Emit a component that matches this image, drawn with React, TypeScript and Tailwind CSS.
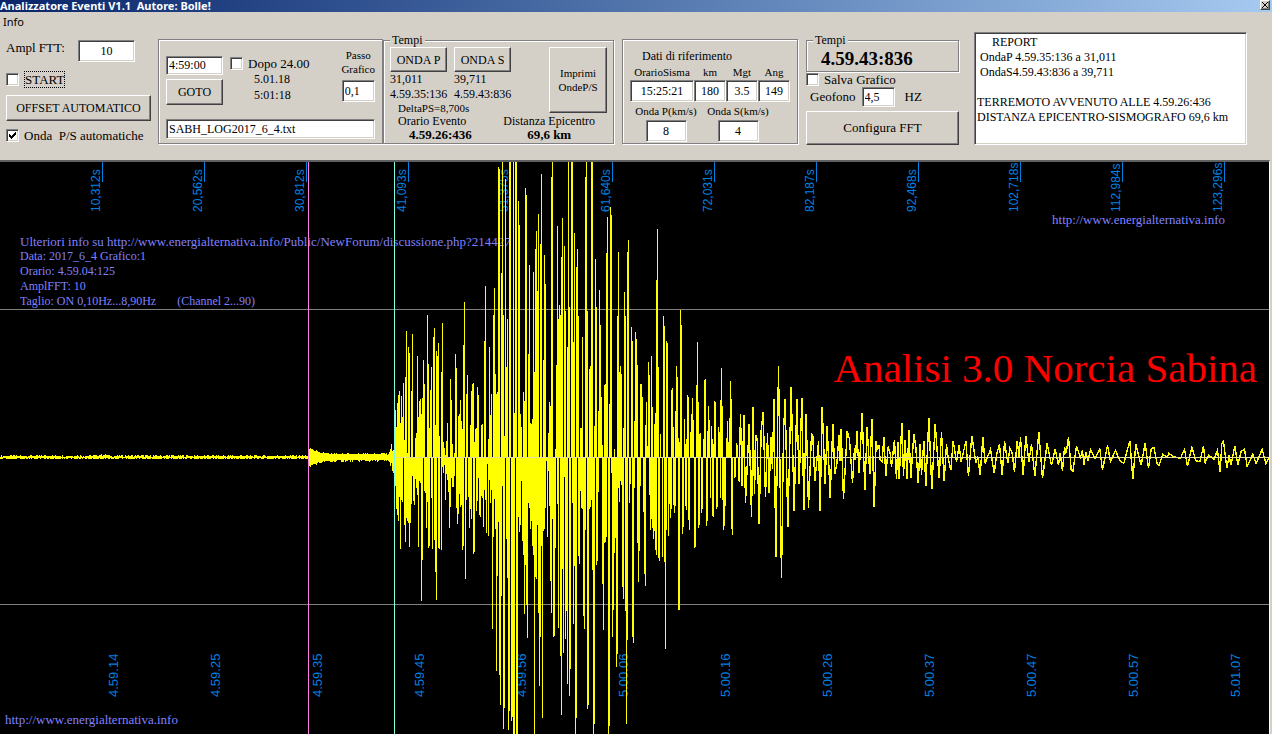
import { useId } from "react";
import clsx from "clsx";

const bevelIn =
  "border border-t-[#808080] border-l-[#808080] border-b-white border-r-white shadow-[inset_1px_1px_0_#404040,inset_-1px_-1px_0_#d4d0c8]";
const bevelOut =
  "border border-t-white border-l-white border-b-[#404040] border-r-[#404040] shadow-[inset_-1px_-1px_0_#808080]";
const etched = "border border-[#808080] shadow-[1px_1px_0_#fff,inset_1px_1px_0_#fff]";

const topTicks = [
  "10,312s", "20,562s", "30,812s", "41,093s", "51,375s", "61,640s",
  "72,031s", "82,187s", "92,468s", "102,718s", "112,984s", "123,296s",
];
const clockTicks = [
  "4.59.14", "4.59.25", "4.59.35", "4.59.45", "4.59.56", "5.00.06",
  "5.00.16", "5.00.26", "5.00.37", "5.00.47", "5.00.57", "5.01.07",
];

const AXIS = 457;
const BURST_X = 395;

// one value per column starting at BURST_X, 0 = the trace stays on the axis
const burstTop = [
  410, 427, 403, 395, 391, 423, 396, 417, 383, 440, 377, 331, 453, 347, 353, 0, 391, 334, 0, 0,
  438, 433, 356, 417, 401, 399, 414, 398, 360, 384, 0, 0, 315, 364, 428, 390, 367, 0, 337, 328,
  425, 351, 356, 343, 436, 0, 372, 323, 442, 448, 455, 441, 423, 0, 0, 379, 400, 444, 0, 453,
  354, 368, 0, 416, 414, 400, 421, 429, 345, 302, 0, 394, 375, 0, 0, 425, 391, 384, 383, 442,
  429, 428, 387, 395, 0, 0, 425, 424, 0, 341, 286, 0, 0, 439, 347, 415, 394, 0, 315, 288,
  374, 394, 392, 167, 169, 0, 273, 162, 315, 436, 179, 367, 319, 0, 162, 162, 0, 0, 162, 413,
  162, 162, 0, 201, 225, 414, 427, 0, 392, 401, 188, 195, 0, 354, 265, 423, 424, 419, 272, 372,
  249, 231, 291, 214, 0, 244, 174, 0, 360, 255, 284, 0, 0, 433, 402, 406, 177, 162, 0, 0,
  449, 365, 226, 319, 305, 315, 257, 218, 0, 246, 311, 0, 347, 162, 307, 0, 162, 162, 342, 233,
  0, 267, 249, 316, 0, 428, 428, 337, 0, 0, 177, 162, 311, 0, 369, 366, 162, 162, 0, 426,
  259, 307, 0, 411, 290, 325, 397, 445, 0, 385, 384, 253, 217, 0, 404, 207, 215, 0, 0, 449,
  0, 0, 316, 252, 372, 366, 374, 0, 428, 292, 316, 0, 252, 240, 0, 0, 327, 341, 0, 421,
  332, 339, 365, 0, 0, 384, 384, 397, 0, 0, 425, 402, 446, 362, 375, 0, 356, 407, 0, 424,
  413, 280, 229, 367, 0, 434, 0, 0, 316, 326, 0, 341, 343, 0, 0, 0, 390, 388, 427, 0,
  411, 366, 377, 438, 442, 310, 325, 0, 0, 419, 444, 439, 395, 397, 0, 432, 414, 398, 420, 0,
  0, 385, 342, 402, 434, 433, 0, 0, 439, 380, 379, 0, 431, 406, 420, 0, 426, 439, 444, 401,
  402, 0, 0, 427, 432, 400, 368, 406, 0, 0, 0, 438, 421, 442, 418, 381, 399, 0, 0, 0,
  0, 443, 445, 0, 427,
];
const burstBottom = [
  485, 508, 514, 520, 496, 548, 499, 501, 0, 524, 541, 517, 520, 522, 546, 522, 503, 475, 500, 504,
  478, 487, 494, 546, 480, 482, 600, 559, 0, 490, 492, 527, 501, 547, 545, 0, 497, 548, 0, 539,
  571, 599, 0, 547, 548, 0, 549, 466, 472, 464, 499, 473, 479, 491, 527, 506, 477, 486, 486, 475,
  0, 507, 523, 513, 493, 506, 504, 549, 545, 0, 578, 499, 0, 496, 527, 508, 518, 0, 553, 551,
  0, 510, 500, 477, 514, 516, 495, 497, 526, 489, 499, 532, 463, 535, 479, 502, 489, 628, 536, 498,
  528, 670, 575, 521, 674, 704, 595, 485, 728, 707, 0, 538, 577, 729, 710, 0, 720, 716, 734, 734,
  0, 734, 734, 516, 531, 524, 480, 540, 554, 613, 564, 604, 637, 502, 507, 528, 520, 545, 554, 734,
  576, 578, 524, 612, 685, 636, 545, 717, 530, 528, 507, 460, 536, 470, 505, 580, 612, 518, 636, 635,
  547, 0, 503, 627, 0, 655, 714, 568, 652, 476, 638, 610, 683, 0, 695, 668, 0, 502, 623, 565,
  734, 717, 0, 555, 563, 490, 507, 508, 615, 628, 529, 0, 708, 704, 508, 506, 499, 569, 734, 723,
  0, 564, 560, 491, 0, 0, 0, 583, 629, 542, 541, 536, 0, 734, 725, 0, 472, 636, 609, 552,
  537, 666, 653, 487, 501, 480, 484, 586, 598, 0, 610, 723, 639, 0, 502, 483, 0, 636, 642, 487,
  0, 0, 542, 581, 550, 485, 0, 0, 511, 573, 585, 0, 0, 0, 494, 529, 518, 527, 538, 530,
  549, 554, 0, 557, 560, 0, 0, 556, 0, 561, 648, 529, 0, 535, 503, 517, 508, 0, 504, 512,
  505, 0, 0, 609, 609, 0, 0, 533, 526, 0, 505, 509, 0, 519, 529, 0, 0, 0, 0, 547,
  546, 0, 0, 527, 524, 0, 512, 508, 0, 0, 0, 525, 520, 0, 0, 497, 0, 515, 516, 0,
  0, 508, 506, 0, 0, 497, 0, 499, 529, 525, 505, 0, 0, 0, 0, 0, 528, 534, 0, 477,
  476, 0, 0, 480, 481,
];

// turning points of the coda: x and y in thirds of a pixel from (740, 310)
const coda =
  "0,312 5,527 10,315 15,578 26,343 33,620 38,290 42,553 46,375 50,388 56,643 62,362 68,305 75,562 81,370 86,548 91,382 96,478 100,268 106,740 114,167 123,805 129,365 134,268 142,652 152,232 161,604 169,268 176,523 184,263 190,601 197,311 204,595 213,372 217,378 223,514 229,452 234,394 239,604 245,290 254,523 260,347 269,565 277,341 283,493 289,460 296,374 298,452 302,356 309,568 320,364 327,388 336,520 342,415 345,450 349,364 356,490 365,310 373,541 380,352 388,493 394,326 401,592 407,392 411,420 415,404 419,450 425,455 430,382 436,499 443,410 449,430 453,470 462,389 468,508 472,397 476,508 484,338 489,499 494,391 500,508 505,359 511,505 520,373 526,410 533,520 539,403 543,495 550,392 556,529 565,325 574,538 584,341 596,505 603,367 611,514 618,403 624,450 631,481 638,392 648,455 656,406 662,457 676,394 684,499 694,377 706,460 712,440 719,496 727,382 734,460 750,418 761,490 769,430 777,403 785,496 792,394 802,460 808,415 815,430 822,485 830,394 836,440 840,382 848,495 856,378 865,455 873,403 883,499 895,367 906,505 920,400 933,466 944,418 954,466 959,430 966,482 972,412 977,430 984,382 992,478 997,484 1008,409 1020,442 1026,420 1030,466 1036,427 1043,452 1050,418 1063,445 1078,418 1086,480 1101,406 1110,455 1125,421 1138,452 1150,460 1168,392 1177,508 1186,403 1202,466 1214,400 1224,475 1232,418 1240,412 1250,460 1256,466 1267,433 1280,442 1285,430 1300,440 1320,445 1332,418 1341,469 1354,412 1366,452 1378,455 1389,409 1394,458 1405,435 1420,448 1431,421 1439,487 1444,400 1449,394 1459,475 1466,436 1471,466 1483,409 1492,465 1502,424 1512,418 1520,469 1537,433 1547,460 1565,418 1576,460 1587,442";

function noise(n: number) {
  const v = Math.sin(n * 12.9898) * 43758.5453;
  return v - Math.floor(v);
}

function quietPath() {
  let d = "";
  for (let x = 0; x < BURST_X; x++) {
    let up = Math.round(0.3 + noise(x) * 1.8);
    let down = Math.round(noise(x + 500) * 1.4);
    if (x >= 98 && x < 108) up += 1;
    if (x >= 309) {
      const amp = 4 + 6 * Math.exp(-(x - 309) / 9);
      up = Math.round(amp - noise(x) * 1.6);
      down = Math.round(amp - noise(x + 90) * 2.4);
    }
    if (x >= 389) {
      up += [2, 5, 9, 2, 3, 6][x - 389];
      down += [1, 6, 3, 9, 12, 14][x - 389];
    }
    d += `M${x} ${AXIS - up}h1v${up + down + 1}h-1z`;
  }
  return d;
}

function burstPath() {
  return burstTop
    .map((t, i) => {
      const top = t || AXIS;
      const bottom = burstBottom[i] || AXIS;
      return `M${BURST_X + i} ${top}h1V${bottom + 1}h-1z`;
    })
    .join("");
}

function codaPoints() {
  return coda
    .split(" ")
    .map((p) => {
      const [x, y] = p.split(",").map(Number);
      return `${740.5 + x / 3},${310 + y / 3}`;
    })
    .join(" ");
}

function Field({ label, value, className }: { label: string; value: string; className?: string }) {
  return (
    <input
      type="text"
      aria-label={label}
      defaultValue={value}
      className={clsx("block min-w-0 bg-white text-black outline-none", bevelIn, className)}
    />
  );
}

function Check({ label, checked, focused }: { label: string; checked?: boolean; focused?: boolean }) {
  const id = useId();
  return (
    <div className="flex items-center gap-[5px]">
      <span className="relative block size-[13px]">
        <input
          id={id}
          type="checkbox"
          defaultChecked={checked}
          className={clsx("peer block size-[13px] appearance-none bg-white", bevelIn)}
        />
        <svg viewBox="0 0 13 13" className="pointer-events-none absolute inset-0 hidden size-[13px] peer-checked:block" shapeRendering="crispEdges">
          <path d="M3 5h1v1h1v1h1v-1h1v-1h1v-1h1v-1h1v3h-1v1h-1v1h-1v1h-1v1h-1v-1h-1v-1h-1z" fill="#000" />
        </svg>
      </span>
      <label
        htmlFor={id}
        className={clsx("text-[13px] leading-[15px] whitespace-pre", focused && "border border-dotted border-black")}
      >
        {label}
      </label>
    </div>
  );
}

function Button({ children, className }: { children: React.ReactNode; className?: string }) {
  return (
    <button type="button" className={clsx("block shrink-0 bg-[#d4d0c8] text-center", bevelOut, className)}>
      {children}
    </button>
  );
}

function StartColumn() {
  return (
    <div className="w-[145px] shrink-0 pt-2">
      <div className="flex h-[22px] items-start justify-between pr-4">
        <label htmlFor="ampl" className="text-[13px] leading-4">Ampl FTT:</label>
        <input id="ampl" type="text" defaultValue="10" className={clsx("h-[22px] w-[57px] bg-white text-center text-[12px] outline-none", bevelIn)} />
      </div>
      <div className="mt-[9px]">
        <Check label="START" focused />
      </div>
      <Button className="mt-[7px] h-[26px] w-full text-[12px]">OFFSET AUTOMATICO</Button>
      <div className="mt-[7px]">
        <Check label={"Onda  P/S automatiche"} checked />
      </div>
    </div>
  );
}

function GotoPanel() {
  return (
    <div className={clsx("mt-[7px] ml-[7px] h-[105px] w-[225px] shrink-0 px-[7px] pt-2", etched)}>
      <div className="flex h-[71px] items-start">
        <div className="flex flex-col gap-1 pt-2">
          <Field label="Orario" value="4:59:00" className="h-[19px] w-[57px] px-[2px] text-[12px]" />
          <Button className="h-[26px] w-[57px] text-[12px]">GOTO</Button>
        </div>
        <div className="ml-[7px] pt-2">
          <Check label="Dopo 24.00" />
          <p className="pl-6 text-[12px] leading-4">5.01.18</p>
          <p className="pl-6 text-[12px] leading-4">5:01:18</p>
        </div>
        <div className="ml-auto flex flex-col items-center">
          <label htmlFor="passo" className="text-center text-[11px] leading-[14px]">
            Passo
            <br />
            Grafico
          </label>
          <input id="passo" type="text" defaultValue="0,1" className={clsx("mt-1 h-[22px] w-[33px] bg-white px-[2px] text-[12px] outline-none", bevelIn)} />
        </div>
      </div>
      <Field label="File" value="SABH_LOG2017_6_4.txt" className="h-5 w-full px-[2px] text-[12px]" />
    </div>
  );
}

function WavePick({ name, seconds, clock }: { name: string; seconds: string; clock: string }) {
  return (
    <div className="w-[57px]">
      <Button className="h-[25px] w-[57px] text-[12px]">{name}</Button>
      <p className="text-[12px] leading-[14px]">{seconds}</p>
      <p className="text-[12px] leading-4">{clock}</p>
    </div>
  );
}

function TimesPanel() {
  return (
    <fieldset className={clsx("mt-px h-[111px] w-[231px] shrink-0 px-[6px]", etched)}>
      <legend className="bg-[#d4d0c8] px-[2px] text-[12px] leading-[14px]">Tempi</legend>
      <div className="flex h-[68px] items-start justify-between">
        <div>
          <div className="flex gap-[7px]">
            <WavePick name="ONDA P" seconds="31,011" clock="4.59.35:136" />
            <WavePick name="ONDA S" seconds="39,711" clock="4.59.43:836" />
          </div>
          <p className="pl-2 text-[11px] leading-[13px]">DeltaPS=8,700s</p>
        </div>
        <Button className="h-[66px] w-[58px] text-[11px] leading-[14px]">
          Imprimi
          <br />
          OndeP/S
        </Button>
      </div>
      <div className="flex justify-between pr-3 pl-2">
        <div>
          <p className="text-[12px] leading-[13px]">Orario Evento</p>
          <p className="pl-[11px] text-[13px] leading-[14px] font-bold">4.59.26:436</p>
        </div>
        <div className="text-center">
          <p className="text-[12px] leading-[13px]">Distanza Epicentro</p>
          <p className="text-[13px] leading-[14px] font-bold">69,6 km</p>
        </div>
      </div>
    </fieldset>
  );
}

const refs = [
  { label: "OrarioSisma", value: "15:25:21" },
  { label: "km", value: "180" },
  { label: "Mgt", value: "3.5" },
  { label: "Ang", value: "149" },
];
const speeds = [
  { label: "Onda P(km/s)", value: "8" },
  { label: "Onda S(km/s)", value: "4" },
];

function ReferencePanel() {
  return (
    <div className={clsx("mt-[7px] ml-2 h-[105px] w-[176px] shrink-0 px-[7px] pt-2", etched)}>
      <h2 className="pl-3 text-[12px] leading-4">Dati di riferimento</h2>
      <div className="grid grid-cols-[64px_32px_32px_32px]">
        {refs.map((r) => (
          <label key={r.label} className="text-center text-[11px] leading-4">
            {r.label}
            <Field label={r.label} value={r.value} className="h-[22px] w-full text-center text-[12px]" />
          </label>
        ))}
      </div>
      <div className="grid grid-cols-[72px_72px]">
        {speeds.map((s) => (
          <label key={s.label} className="text-center text-[11px] leading-[18px] whitespace-nowrap">
            {s.label}
            <Field label={s.label} value={s.value} className="mx-auto h-[22px] w-[41px] text-center text-[12px]" />
          </label>
        ))}
      </div>
    </div>
  );
}

function GeophoneColumn() {
  return (
    <div className="ml-2 w-[153px] shrink-0 pt-px">
      <fieldset className={clsx("h-[39px] px-[6px]", etched)}>
        <legend className="bg-[#d4d0c8] px-[2px] text-[12px] leading-[14px]">Tempi</legend>
        <p className="pl-2 text-[19px] leading-6 font-bold">4.59.43:836</p>
      </fieldset>
      <Check label="Salva Grafico" />
      <div className="flex h-5 items-center gap-[6px] pl-1">
        <label htmlFor="geofono" className="text-[13px] leading-4">Geofono</label>
        <input id="geofono" type="text" defaultValue="4,5" className={clsx("h-5 w-[33px] bg-white px-[2px] text-[12px] outline-none", bevelIn)} />
        <span className="pl-1 text-[13px] leading-4">HZ</span>
      </div>
      <Button className="mt-1 h-[34px] w-full text-[13px]">Configura FFT</Button>
    </div>
  );
}

const report = `     REPORT
 OndaP 4.59.35:136 a 31,011
 OndaS4.59.43:836 a 39,711

TERREMOTO AVVENUTO ALLE 4.59.26:436
DISTANZA EPICENTRO-SISMOGRAFO 69,6 km`;

function Chart() {
  return (
    <main className="relative min-h-[572px] flex-1 overflow-hidden bg-black text-[13px] leading-[15px] text-[#8080ff]">
      <div className="absolute top-[72px] left-5 whitespace-pre">
        <p>Ulteriori info su http://www.energialternativa.info/Public/NewForum/discussione.php?214427</p>
        <div className="text-[12px]">
          <p>Data: 2017_6_4 Grafico:1</p>
          <p>Orario: 4.59.04:125</p>
          <p>AmplFFT: 10</p>
          <p>{"Taglio: ON 0,10Hz...8,90Hz       (Channel 2...90)"}</p>
        </div>
      </div>
      <a href="#sito" className="absolute top-[50px] right-11">http://www.energialternativa.info</a>
      <a href="#sito" className="absolute bottom-[7px] left-[5px]">http://www.energialternativa.info</a>
      <h1 className="absolute top-[182px] right-3 text-[41px] leading-[48px] whitespace-nowrap text-[#ff0000]">
        Analisi 3.0 Norcia Sabina
      </h1>
      <svg
        viewBox="0 162 1269 572"
        preserveAspectRatio="xMinYMin slice"
        className="pointer-events-none absolute inset-0 size-full font-['Liberation_Sans',Arial,sans-serif]"
      >
        {topTicks.map((t, i) => (
          <g key={t} fill="#0080e0" className="text-[12px]">
            <rect x={102 + i * 102} y={162} width={1} height={20} />
            <text transform={`translate(${100 + i * 102} 212) rotate(-90)`}>{t}</text>
          </g>
        ))}
        {clockTicks.map((t, i) => (
          <text key={t} fill="#0080e0" className="text-[13px]" transform={`translate(${118 + i * 102} 697) rotate(-90)`}>
            {t}
          </text>
        ))}
        <g shapeRendering="crispEdges">
          <path d="M0 309h1269v1H0zM0 604h1269v1H0z" fill="#808080" />
          <path d="M0 457h1269v1H0z" fill="#c0c0c0" />
          <path d={quietPath()} fill="#ff0" />
          <path d={burstPath()} fill="#ff0" />
          <polyline points={codaPoints()} fill="none" stroke="#ff0" strokeWidth={1.4} />
          <path d="M395 457h874v1H395z" fill="#e0e0a0" />
          <path d="M308 162h1v572h-1z" fill="#ff80e0" />
          <path d="M394 162h1v572h-1z" fill="#80ffe0" />
        </g>
      </svg>
    </main>
  );
}

export default function App() {
  return (
    <div className="flex min-h-screen flex-col bg-[#d4d0c8] font-['Liberation_Serif','Times_New_Roman',serif] text-black">
      <header className="flex h-3 items-center justify-between bg-linear-to-r from-[#0a246a] to-[#a6caf0] pr-[2px]">
        <span className="font-['Noto_Sans',sans-serif] text-[11px] leading-3 font-bold whitespace-pre text-white">
          {"Analizzatore Eventi V1.1  Autore: Bolle!"}
        </span>
        <button type="button" aria-label="Chiudi" className={clsx("mb-[2px] flex h-[10px] w-[10px] items-center justify-center bg-[#d4d0c8]", bevelOut)}>
          <svg viewBox="0 0 6 6" className="size-[6px]">
            <path d="M0 0l6 6M6 0l-6 6" stroke="#000" />
          </svg>
        </button>
      </header>
      <nav className="h-5 px-[3px] font-['Noto_Sans',sans-serif] text-[11px] leading-5">
        <button type="button">Info</button>
      </nav>
      <section className="flex h-32 items-start pl-[6px]">
        <StartColumn />
        <GotoPanel />
        <TimesPanel />
        <ReferencePanel />
        <GeophoneColumn />
        <textarea
          aria-label="Report"
          defaultValue={report}
          className={clsx("mr-[25px] ml-[15px] h-[113px] min-w-0 flex-1 resize-none overflow-hidden bg-white px-[2px] py-[2px] text-[12px] leading-[15px] outline-none", bevelIn)}
        />
      </section>
      <div className="mr-[2px] flex flex-1 flex-col border-t-2 border-r border-t-[#606060] border-r-white">
        <Chart />
      </div>
    </div>
  );
}
